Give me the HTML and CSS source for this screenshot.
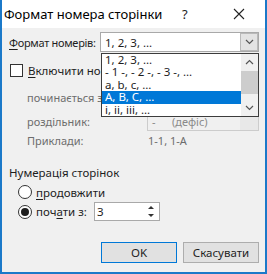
FILE: index.html
```html
<!DOCTYPE html>
<html lang="uk">
<head>
    <meta charset="UTF-8">
    <title>Формат номера сторінки</title>
    <link rel="stylesheet" href="styles.css">
</head>
<body>
    <div class="window">
        <div class="titlebar">
            <span class="title">Формат номера сторінки</span>
            <span class="help">?</span>
            <svg class="close" width="12" height="12" viewBox="0 0 12 12">
                <path d="M1 1 L11 11 M11 1 L1 11" stroke="#222" stroke-width="1.1" fill="none"/>
            </svg>
        </div>

        <div class="content">
            <div class="row row-format">
                <span class="label"><u>Ф</u>ормат номерів:</span>
                <div class="combo combo-open">
                    <span class="combo-text">1, 2, 3, …</span>
                    <span class="combo-btn">
                        <svg width="9" height="6" viewBox="0 0 9 6"><path d="M1 1 L4.5 4.5 L8 1" stroke="#555" stroke-width="1.2" fill="none"/></svg>
                    </span>
                    <div class="droplist">
                        <ul class="options">
                            <li>1, 2, 3, …</li>
                            <li>- 1 -, - 2 -, - 3 -, …</li>
                            <li>a, b, c, …</li>
                            <li class="selected">A, B, C, …</li>
                            <li>i, ii, iii, …</li>
                        </ul>
                        <div class="scrollbar">
                            <svg class="arrow" width="9" height="6" viewBox="0 0 9 6"><path d="M1 5 L4.5 1.5 L8 5" stroke="#555" stroke-width="1.2" fill="none"/></svg>
                            <div class="track"><div class="thumb"></div></div>
                            <svg class="arrow" width="9" height="6" viewBox="0 0 9 6"><path d="M1 1 L4.5 4.5 L8 1" stroke="#555" stroke-width="1.2" fill="none"/></svg>
                        </div>
                    </div>
                </div>
            </div>

            <div class="row row-check">
                <span class="checkbox"></span>
                <span><u>В</u>ключити номер розділу</span>
            </div>

            <div class="sub">
                <div class="row row-start disabled">починається зі стилю:</div>
                <div class="row row-sep disabled">
                    <span class="sub-label">роздільник:</span>
                    <div class="combo combo-disabled">
                        <span class="combo-text"><span class="dash">-</span>(дефіс)</span>
                        <span class="combo-btn"></span>
                    </div>
                </div>
                <div class="row row-examples disabled">
                    <span class="sub-label">Приклади:</span>
                    <span class="example">1-1, 1-A</span>
                </div>
            </div>

            <div class="row row-group">Нумерація сторінок</div>

            <div class="row row-radio">
                <span class="radio"></span>
                <span><u>п</u>родовжити</span>
            </div>
            <div class="row row-radio row-startat">
                <span class="radio checked"></span>
                <span class="radio-label">поч<u>а</u>ти з:</span>
                <div class="spin">
                    <span class="spin-value">3</span>
                    <div class="spin-btns">
                        <span class="spin-up"></span>
                        <span class="spin-down"></span>
                    </div>
                </div>
            </div>

            <div class="buttons">
                <button class="btn btn-default">OK</button>
                <button class="btn">Скасувати</button>
            </div>
        </div>
    </div>
</body>
</html>
```

FILE: styles.css
```css
* {
    box-sizing: border-box;
}
body {
    margin: 0;
    font-family: "Noto Sans", "Liberation Sans", sans-serif;
    font-size: 11px;
    color: #1e1e1e;
    background: #ffffff;
}
u {
    text-decoration-thickness: 1px;
    text-underline-offset: 2px;
}
.window {
    width: 267px;
    height: 274px;
    border: 2px solid #1b79c9;
    border-top: 0;
    background: #f0f0f0;
    display: flex;
    flex-direction: column;
    overflow: hidden;
}
.titlebar {
    height: 28px;
    background: #ffffff;
    display: flex;
    align-items: center;
    padding-left: 2px;
    flex-shrink: 0;
}
.title {
    font-size: 13px;
    color: #000;
    flex: 1;
}
.help {
    font-size: 13px;
    width: 14px;
    margin-right: 37px;
    color: #222;
}
.close {
    margin-right: 20px;
}
.content {
    padding: 0 6px 0 6px;
    display: flex;
    flex-direction: column;
}
.row {
    display: flex;
    align-items: center;
    white-space: nowrap;
}
.row-format {
    margin-top: 4px;
    height: 20px;
}
.label {
    width: 92px;
    padding-left: 1px;
    flex-shrink: 0;
    font-size: 11px;
    letter-spacing: -0.3px;
}
.combo {
    position: relative;
    display: flex;
    align-items: center;
    height: 100%;
    border: 1px solid #a9a9a9;
    background: #ffffff;
}
.combo-open {
    width: 159px;
    font-size: 11.5px;
}
.combo-text {
    flex: 1;
    padding-left: 4px;
}
.combo-btn {
    width: 18px;
    height: 18px;
    display: flex;
    align-items: center;
    justify-content: center;
}
.combo-open .combo-btn {
    background: #e3e3e3;
    border: 1px solid #b9b9b9;
}
.droplist {
    position: absolute;
    top: 20px;
    left: 0;
    width: 158px;
    height: 64px;
    border: 1px solid #3c3c3c;
    background: #ffffff;
    display: flex;
    z-index: 2;
}
.options {
    list-style: none;
    margin: 0;
    padding: 0;
    flex: 1;
}
.options li {
    height: 12.4px;
    line-height: 12px;
    padding-left: 3px;
    white-space: nowrap;
}
.options li.selected {
    background: #0078d7;
    color: #ffffff;
}
.scrollbar {
    width: 17px;
    background: #f0f0f0;
    display: flex;
    flex-direction: column;
    align-items: center;
}
.scrollbar .arrow {
    margin: 5px 0;
}
.track {
    flex: 1;
    width: 100%;
}
.thumb {
    width: 100%;
    height: 23px;
    margin-top: 1px;
    background: #cdcdcd;
}
.row-check {
    margin-top: 11px;
    height: 14px;
    font-size: 11.5px;
}
.checkbox {
    width: 13px;
    height: 13px;
    border: 1px solid #333;
    background: #ffffff;
    margin: 0 5px 0 2px;
    flex-shrink: 0;
}
.sub {
    padding-left: 19px;
    display: flex;
    flex-direction: column;
}
.disabled {
    color: #6d6d6d;
}
.row-start {
    margin-top: 11px;
    height: 18px;
}
.row-sep {
    margin-top: 6px;
    height: 19px;
}
.sub-label {
    width: 121px;
}
.combo-disabled {
    width: 113px;
    border-color: #cccccc;
    background: #f0f0f0;
    color: #8a8a8a;
}
.combo-disabled .combo-btn {
    background: #e8e8e8;
    height: 17px;
}
.dash {
    display: inline-block;
    width: 20px;
}
.row-examples {
    margin-top: 2px;
    height: 14px;
}
.row-group {
    margin-top: 17px;
    height: 16px;
    padding-left: 1px;
    font-size: 11.5px;
}
.row-radio {
    margin-top: 4px;
    height: 16px;
    padding-left: 10px;
    font-size: 11.5px;
}
.radio {
    width: 14px;
    height: 14px;
    border: 1px solid #333;
    border-radius: 50%;
    background: #ffffff;
    margin-right: 4px;
    display: flex;
    align-items: center;
    justify-content: center;
}
.radio.checked::after {
    content: "";
    width: 8px;
    height: 8px;
    border-radius: 50%;
    background: #1e1e1e;
}
.row-startat {
    margin-top: 2px;
    height: 19px;
}
.radio-label {
    width: 58px;
}
.spin {
    width: 66px;
    height: 19px;
    border: 1px solid #a9a9a9;
    background: #ffffff;
    display: flex;
}
.spin-value {
    flex: 1;
    padding-left: 2px;
    line-height: 17px;
}
.spin-btns {
    width: 16px;
    display: flex;
    flex-direction: column;
}
.spin-btns span {
    flex: 1;
    display: flex;
    align-items: center;
    justify-content: center;
}
.spin-up::after {
    content: "";
    border-left: 3px solid transparent;
    border-right: 3px solid transparent;
    border-bottom: 3px solid #333;
}
.spin-down::after {
    content: "";
    border-left: 3px solid transparent;
    border-right: 3px solid transparent;
    border-top: 3px solid #333;
}
.buttons {
    margin-top: 21px;
    display: flex;
    justify-content: flex-end;
    gap: 6px;
}
.btn {
    height: 21px;
    width: 76px;
    font-family: inherit;
    font-size: 11.5px;
    color: #1e1e1e;
    background: #e1e1e1;
    border: 1px solid #adadad;
    padding: 0;
}
.btn-default {
    border-color: #0078d7;
}
```
